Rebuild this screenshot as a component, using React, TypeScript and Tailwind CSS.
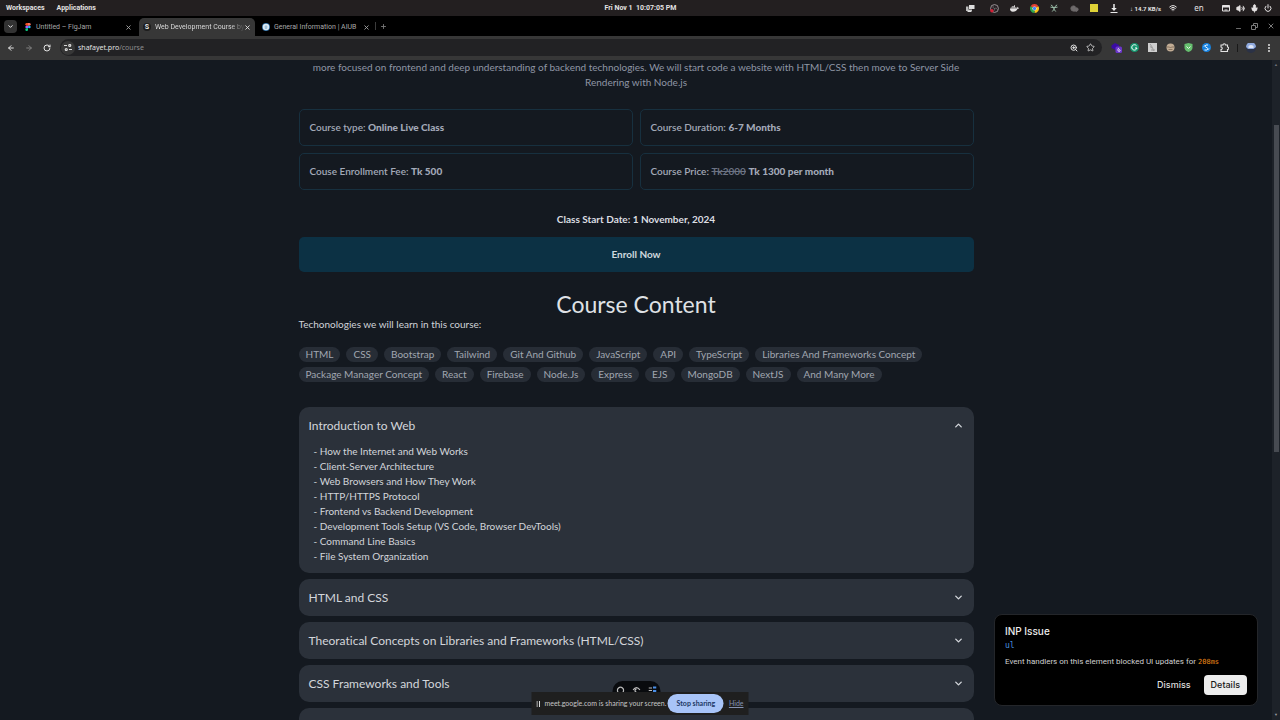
import React, { FunctionComponent, ReactNode, useState } from "react";
import {
  ArrowLeft,
  ArrowRight,
  ChevronDown,
  ChevronUp,
  Cloud,
  Mic,
  Minus,
  Plus,
  Power,
  RotateCw,
  Star,
  Volume2,
  Wifi,
  X,
  ZoomIn,
} from "lucide-react";
import { FaDocker } from "react-icons/fa";

interface CourseSection {
  title: string;
  topics: string[];
}

interface TabProps {
  title: string;
  icon: ReactNode;
  active?: boolean;
}

const technologies = [
  "HTML", "CSS", "Bootstrap", "Tailwind", "Git And Github", "JavaScript", "API", "TypeScript",
  "Libraries And Frameworks Concept", "Package Manager Concept", "React", "Firebase", "Node.Js",
  "Express", "EJS", "MongoDB", "NextJS", "And Many More",
];

const sections: CourseSection[] = [
  {
    title: "Introduction to Web",
    topics: [
      "How the Internet and Web Works",
      "Client-Server Architecture",
      "Web Browsers and How They Work",
      "HTTP/HTTPS Protocol",
      "Frontend vs Backend Development",
      "Development Tools Setup (VS Code, Browser DevTools)",
      "Command Line Basics",
      "File System Organization",
    ],
  },
  { title: "HTML and CSS", topics: [] },
  { title: "Theoratical Concepts on Libraries and Frameworks (HTML/CSS)", topics: [] },
  { title: "CSS Frameworks and Tools", topics: [] },
  { title: "", topics: [] },
];

const ChromeLogo = () => (
  <svg viewBox="0 0 24 24" className="size-[9px]">
    <path d="M12 12 1.6 6A12 12 0 0 1 22.4 6Z" fill="#e34133" />
    <path d="M12 12 22.4 6A12 12 0 0 1 12 24Z" fill="#fbc116" />
    <path d="M12 12V24A12 12 0 0 1 1.6 6Z" fill="#2da94f" />
    <circle cx="12" cy="12" r="5.6" fill="#fff" />
    <circle cx="12" cy="12" r="4.4" fill="#4285f4" />
  </svg>
);

const FigmaLogo = () => (
  <svg viewBox="0 0 16 24" className="h-[8px] w-[6px]">
    <path d="M4 0h4v8H4a4 4 0 0 1 0-8Z" fill="#f24e1e" />
    <path d="M8 0h4a4 4 0 0 1 0 8H8Z" fill="#ff7262" />
    <path d="M4 8h4v8H4a4 4 0 0 1 0-8Z" fill="#a259ff" />
    <circle cx="12" cy="12" r="4" fill="#1abcfe" />
    <path d="M4 16h4v4a4 4 0 1 1-4-4Z" fill="#0acf83" />
  </svg>
);

const TopBar = () => (
  <header className="flex h-4 shrink-0 items-center bg-[#231f20] text-[#e4e2e2]">
    <div className="flex flex-1 gap-3 pl-[6px] text-[7px] font-bold">
      <button>Workspaces</button>
      <button>Applications</button>
    </div>
    <time className="text-[7px] font-bold">Fri Nov 1&nbsp; 10:07:05 PM</time>
    <div className="flex flex-1 items-center justify-end pr-[5px]">
      <span className="flex w-7 justify-center">
        <svg viewBox="0 0 18 14" className="h-[7px] w-[9px]" fill="#dedede">
          <path d="M6 0h11v8H6Z" />
          <path d="M0 3h5v6h7v3H0Z" fill="#bbb" />
          <path d="M3 11h8v3H3Z" />
        </svg>
      </span>
      <span className="flex w-5 justify-center">
        <svg viewBox="0 0 24 24" className="size-[9px]">
          <circle cx="12" cy="12" r="10.5" fill="#282226" stroke="#b9b3b5" strokeWidth="2" />
          <path d="M12 12c-4-1-5-4-3-7M12 12c4-2 7 0 8 3M12 12c1 4-1 7-5 7" fill="none" stroke="#8d8789" strokeWidth="1.5" />
          <circle cx="5" cy="18" r="4.5" fill="#d41f35" />
        </svg>
      </span>
      <span className="flex w-5 justify-center"><FaDocker size={9} /></span>
      <span className="flex w-5 justify-center"><ChromeLogo /></span>
      <span className="flex w-5 justify-center">
        <svg viewBox="0 0 18 18" className="size-2" fill="none" stroke="#a9ceb8" strokeWidth="2">
          <path d="M2 2l5 4 2 4 2-4 5-4M1 7l6 1M17 7l-6 1M9 9v4M5 17l4-5 4 5" />
        </svg>
      </span>
      <span className="flex w-5 justify-center">
        <Cloud size={9} fill="#6e6a6b" className="text-[#6e6a6b]" />
      </span>
      <span className="flex w-5 justify-center"><span className="size-2 bg-[#dfd237]" /></span>
      <span className="flex w-5 justify-center">
        <svg viewBox="0 0 16 18" className="h-[9px] w-2" fill="#ebebeb">
          <path d="M6.500 0h3v8h4L8 14 2.500 8h4ZM1 16h14v2H1Z" />
        </svg>
      </span>
      <span className="flex w-[43px] items-center justify-center whitespace-nowrap text-[6px] font-bold">↓ 14.7 KB/s</span>
      <span className="flex w-3 justify-center"><Wifi size={8} strokeWidth={3} /></span>
      <span className="flex w-10 justify-center font-['Noto_Sans',sans-serif] text-[8px] leading-[10px]">en</span>
      <span className="flex w-[14px] justify-center">
        <svg viewBox="0 0 16 14" className="h-[7px] w-2">
          <path d="M1 1h14v11H1Z" fill="none" stroke="#e4e2e2" strokeWidth="2" />
          <path d="M1 1h14v4H1ZM5 9h6v2H5Z" fill="#e4e2e2" />
        </svg>
      </span>
      <span className="flex w-[14px] justify-center"><Volume2 size={9} fill="#e4e2e2" strokeWidth={2} /></span>
      <span className="flex w-[14px] justify-center"><Mic size={9} fill="#e4e2e2" /></span>
      <span className="flex w-[14px] justify-center"><Power size={8} strokeWidth={3} /></span>
    </div>
  </header>
);

const Tab: FunctionComponent<TabProps> = ({ title, icon, active }) => {
  return (
    <div
      className={
        active
          ? "flex h-full w-[116px] items-center rounded-t-[5px] bg-[#373737] px-1 text-[#e6e6e6]"
          : "flex h-full w-[116px] items-center px-1 text-[#a8a8a8]"
      }
    >
      <span className="flex w-2 shrink-0 justify-center">{icon}</span>
      <button
        className={
          active
            ? "ml-1 flex-1 whitespace-nowrap bg-linear-to-r from-[#e6e6e6] from-85% to-[#444] bg-clip-text text-left text-[7px] text-transparent"
            : "ml-1 flex-1 whitespace-nowrap text-left text-[7px]"
        }
      >
        {title}
      </button>
      <button aria-label="Close tab" className="shrink-0"><X size={7} strokeWidth={3} /></button>
    </div>
  );
};

const TabStrip = () => (
  <div className="flex h-5 shrink-0 items-center bg-black">
    <button aria-label="Search tabs" className="ml-1 flex size-[13px] items-center justify-center rounded-[4px] bg-[#323232] text-white">
      <ChevronDown size={7} strokeWidth={3} />
    </button>
    <div className="ml-[3px] flex h-full items-center gap-[3px] pt-[2px]">
      <Tab title="Untitled – FigJam" icon={<FigmaLogo />} />
      <Tab
        active
        title="Web Development Course by"
        icon={<span className="flex size-2 items-center justify-center rounded-full bg-[#1d1d1d] text-[7px] font-bold">S</span>}
      />
      <Tab
        title="General Information | AIUB"
        icon={
          <svg viewBox="0 0 16 16" className="size-2">
            <circle cx="8" cy="8" r="8" fill="#2e6da4" />
            <circle cx="8" cy="8" r="6.500" fill="#dbe9f3" />
            <path d="M8 4l3 3-1 5H6L5 7Z" fill="#9fc0d8" />
          </svg>
        }
      />
    </div>
    <span className="ml-px h-2 w-px bg-[#3c3c3c]" />
    <button aria-label="New tab" className="ml-1 text-[#7b7b7b]"><Plus size={7} strokeWidth={3} /></button>
    <div className="ml-auto flex items-center gap-[9px] pr-[5px] text-[#7b7b7b]">
      <button aria-label="Minimize" className="pt-1"><Minus size={7} strokeWidth={3} /></button>
      <button aria-label="Restore">
        <svg viewBox="0 0 14 14" className="size-[7px]" fill="none" stroke="currentColor" strokeWidth="2">
          <path d="M1 5h8v8H1ZM5 5V1h8v8H9" />
        </svg>
      </button>
      <button aria-label="Close window"><X size={8} strokeWidth={3} /></button>
    </div>
  </div>
);

const Toolbar = () => (
  <div className="flex h-6 shrink-0 items-center bg-[#373737] pb-px pr-[6px] text-[#e3e3e3]">
    <div className="flex w-[60px] justify-between pl-[7px] pr-[9px]">
      <button aria-label="Back"><ArrowLeft size={8} strokeWidth={3} /></button>
      <button aria-label="Forward" className="text-[#808080]"><ArrowRight size={8} strokeWidth={3} /></button>
      <button aria-label="Reload"><RotateCw size={8} strokeWidth={3} /></button>
    </div>
    <div className="flex h-[17px] flex-1 items-center rounded-full bg-[#222224] pl-px pr-[7px]">
      <button aria-label="Site information" className="flex size-[14px] items-center justify-center rounded-full bg-[#373737]">
        <svg viewBox="0 0 16 14" className="h-[7px] w-2" fill="none" stroke="#d8d8d8" strokeWidth="2.400">
          <path d="M0 3h6M10 11h6" />
          <circle cx="11.500" cy="3" r="2" />
          <circle cx="4.500" cy="11" r="2" />
        </svg>
      </button>
      <p className="ml-[3px] flex-1 font-['Noto_Sans',sans-serif] text-[7px] leading-[10px]">
        <span>shafayet.pro</span>
        <span className="text-[#8e8e8e]">/course</span>
      </p>
      <button aria-label="Zoom" className="mr-2"><ZoomIn size={8} strokeWidth={3} /></button>
      <button aria-label="Bookmark"><Star size={9} strokeWidth={2} /></button>
    </div>
    <div className="flex items-center text-[5px]">
      <span className="ml-[5px] flex w-[18px] justify-center">
        <svg viewBox="0 0 22 22" className="size-[11px]">
          <path d="M1 7l7-5 8 4v6l-7 4-8-4Z" fill="#3a0ca3" />
          <rect x="9" y="9" width="13" height="13" rx="3" fill="#6b35c9" />
          <path d="M16 12c-3 1-3 7 0 7s3-4 0-4" fill="none" stroke="#fff" strokeWidth="1.500" />
        </svg>
      </span>
      <span className="flex w-[18px] justify-center">
        <svg viewBox="0 0 18 18" className="size-[9px]">
          <circle cx="9" cy="9" r="9" fill="#15976f" />
          <path d="M13 5.500A5.300 5.300 0 1 0 14 10h-4" fill="none" stroke="#fff" strokeWidth="2" />
        </svg>
      </span>
      <span className="flex w-[18px] justify-center">
        <svg viewBox="0 0 18 18" className="size-[9px]">
          <rect width="18" height="18" fill="#cfcfcf" />
          <path d="M4 2l5 7 2 7M6 14h8M4 7l4 3" stroke="#999" strokeWidth="2" fill="none" />
        </svg>
      </span>
      <span className="flex w-[18px] justify-center">
        <svg viewBox="0 0 18 18" className="size-[9px]">
          <circle cx="9" cy="9" r="8" fill="#c2ad95" />
          <path d="M2 8h5l2 2 2-2h5M5 13h8" stroke="#75624f" strokeWidth="1.500" fill="none" />
        </svg>
      </span>
      <span className="flex w-[18px] justify-center">
        <svg viewBox="0 0 18 18" className="size-[9px]">
          <path d="M9 0l8 2v7q0 6-8 9-8-3-8-9V2Z" fill="#66bf6f" />
          <path d="M5 7l4 4 4-4" stroke="#e8f7e9" strokeWidth="2" fill="none" />
        </svg>
      </span>
      <span className="flex w-[18px] justify-center">
        <svg viewBox="0 0 18 18" className="size-[9px]">
          <circle cx="9" cy="9" r="9" fill="#1682e0" />
          <path d="M12 4H8a3 3 0 0 0 0 5h2a3 3 0 0 1 0 5H5M4 7l3-3M11 14l3-3" stroke="#fff" strokeWidth="1.800" fill="none" />
        </svg>
      </span>
      <button aria-label="Extensions" className="flex w-[18px] justify-center">
        <svg viewBox="0 0 18 18" className="size-[9px]" fill="none" stroke="#e3e3e3" strokeWidth="2.200">
          <path d="M2 4h4a2 2 0 0 1 5 0h4v4a2 2 0 0 1 0 5v4H2v-4a2 2 0 0 0 0-5Z" />
        </svg>
      </button>
      <span className="ml-1 h-2 w-px bg-[#191919]" />
      <button aria-label="Profile" className="ml-2">
        <svg viewBox="0 0 20 20" className="size-[10px]">
          <circle cx="10" cy="10" r="10" fill="#2b3246" />
          <path d="M0 8a10 10 0 0 1 20 0l-5 4H4Z" fill="#8fa9dd" />
          <path d="M5 6q5-4 10 0v4H5Z" fill="#dfe6f4" />
        </svg>
      </button>
      <button aria-label="Menu" className="ml-2 flex w-[10px] justify-center">
        <svg viewBox="0 0 4 16" className="h-2 w-[2px]" fill="#e3e3e3">
          <circle cx="2" cy="2" r="2" />
          <circle cx="2" cy="8" r="2" />
          <circle cx="2" cy="14" r="2" />
        </svg>
      </button>
    </div>
  </div>
);

const InfoCard: FunctionComponent<{ children: ReactNode }> = ({ children }) => (
  <p className="rounded-[5px] border border-[#17303f] p-[10px] text-[10px] font-semibold leading-[15px] text-[#a3a9b8]">
    {children}
  </p>
);

const Accordion = () => {
  const [open, setOpen] = useState(0);
  return (
    <div className="mt-[25px] flex flex-col gap-[6px]">
      {sections.map((section, i) => (
        <section key={i} className="rounded-[10px] bg-[#2b313a] text-[#d3d6db]">
          <button
            aria-expanded={open === i}
            onClick={() => setOpen(open === i ? -1 : i)}
            className="flex h-[37px] w-full items-center justify-between px-[10px] text-left text-[12px]"
          >
            {section.title}
            {open === i ? <ChevronUp size={11} strokeWidth={3} /> : <ChevronDown size={11} strokeWidth={3} />}
          </button>
          {open === i && section.topics.length > 0 && (
            <ul className="px-[15px] pb-[9px] text-[10px] leading-[15px]">
              {section.topics.map((topic) => (
                <li key={topic}>- {topic}</li>
              ))}
            </ul>
          )}
        </section>
      ))}
    </div>
  );
};

const CoursePage = () => (
  <main className="min-w-0 flex-1 overflow-hidden font-['Lato',sans-serif]">
    <div className="mx-auto max-w-[675px]">
      <p className="px-2 text-center text-[10px] leading-[15px] text-[#8f96a5]">
        more focused on frontend and deep understanding of backend technologies. We will start code a website with
        HTML/CSS then move to Server Side Rendering with Node.js
      </p>
      <div className="mt-[19px] grid grid-cols-2 gap-[7px]">
        <InfoCard>Course type: <b>Online Live Class</b></InfoCard>
        <InfoCard>Course Duration: <b>6-7 Months</b></InfoCard>
        <InfoCard>Couse Enrollment Fee: <b>Tk 500</b></InfoCard>
        <InfoCard>Course Price: <del className="font-bold text-[#6b7282]">Tk2000</del> <b>Tk 1300 per month</b></InfoCard>
      </div>
      <p className="mt-[22px] text-center text-[10px] font-bold leading-[15px] text-[#dcdee2]">
        Class Start Date: 1 November, 2024
      </p>
      <button className="mt-[10px] h-[35px] w-full rounded-[5px] bg-[#0c3144] text-[10px] font-bold text-[#cfd8de]">
        Enroll Now
      </button>
      <h1 className="mt-5 text-center text-[23px] leading-[25px] text-[#dfe1e5]">Course Content</h1>
      <p className="text-[10px] leading-[15px] text-[#d0d3d9]">Techonologies we will learn in this course:</p>
      <ul className="mt-[15px] flex flex-wrap gap-x-[6px] gap-y-[5px] text-[10px] leading-[15px] text-[#a1a7b1]">
        {technologies.map((tech) => (
          <li key={tech} className="rounded-full bg-[#272d36] px-[7px]">{tech}</li>
        ))}
      </ul>
      <Accordion />
    </div>
  </main>
);

const InpIssue = () => (
  <aside className="absolute bottom-[14px] right-[22px] w-[264px] rounded-[8px] border border-[#24262a] bg-black p-[10px] font-['Inter',sans-serif]">
    <h2 className="text-[10px] font-medium leading-[12px] text-[#ededed]">INP Issue</h2>
    <p className="mt-1 font-['DejaVu_Sans_Mono',monospace] text-[8px] leading-[10px] text-[#4a93e0]">ul</p>
    <p className="mt-[6px] font-['Roboto',sans-serif] text-[8px] leading-[10px] text-[#d0d0d0]">
      Event handlers on this element blocked UI updates for{" "}
      <span className="font-['DejaVu_Sans_Mono',monospace] text-[7px] text-[#f08c18]">208ms</span>
    </p>
    <div className="mt-2 flex justify-end gap-[6px] text-[9px] font-medium">
      <button className="h-5 px-[7px] text-[#dedede]">Dismiss</button>
      <button className="h-5 rounded-[4px] bg-[#ededed] px-[7px] text-[#171717]">Details</button>
    </div>
  </aside>
);

const SharingBar = () => (
  <div className="absolute bottom-[5px] left-1/2 flex -translate-x-1/2 flex-col items-center">
    <div className="mr-2 flex h-[11px] w-12 items-center justify-center gap-2 rounded-t-[10px] bg-[#090b0e] pt-1 text-[#bcbcbc]">
      <svg viewBox="0 0 16 12" className="h-[6px] w-2" fill="none" stroke="currentColor" strokeWidth="2.500">
        <path d="M3 12a6 6 0 1 1 10 0" />
      </svg>
      <svg viewBox="0 0 16 12" className="h-[6px] w-2" fill="none" stroke="currentColor" strokeWidth="2.500">
        <path d="M1 8q7-10 14 0M8 6a3 3 0 0 0 0 6" />
      </svg>
      <svg viewBox="0 0 16 12" className="h-[6px] w-2">
        <path d="M0 3h7v2H0ZM0 8h7v2H0Z" fill="#bcbcbc" />
        <path d="M9 1h7v4H9ZM9 8h7v4H9Z" fill="#4a8fe8" />
      </svg>
    </div>
    <div className="flex h-[23px] w-[217px] items-center whitespace-nowrap bg-[#1f1f1f] px-[5px] font-['Lato',sans-serif] text-[7px] text-[#c6c6c6]">
      <svg viewBox="0 0 8 12" className="h-[6px] w-1 shrink-0" fill="#dedede">
        <path d="M0 0h2v12H0ZM5 0h2v12H5Z" />
      </svg>
      <span className="ml-1">meet.google.com is sharing your screen.</span>
      <button className="ml-auto h-[19px] w-14 shrink-0 rounded-full bg-[#a8c4f8] font-bold text-[#1c3764]">Stop sharing</button>
      <a href="#" className="ml-[5px] text-[#8593b3] underline">Hide</a>
    </div>
  </div>
);

const App: FunctionComponent = () => {
  return (
    <div className="relative flex h-screen flex-col overflow-hidden bg-[#141920] font-['Roboto',sans-serif] [font-variant-ligatures:none]">
      <TopBar />
      <TabStrip />
      <Toolbar />
      <div className="flex min-h-0 flex-1">
        <CoursePage />
        <div className="flex w-2 shrink-0 flex-col items-center justify-between bg-[#1d2229] py-[3px]">
          <span className="text-[4px] leading-[4px] text-[#6d7178]">▲</span>
          <div className="mt-[58px] w-[5px] basis-1/2 bg-[#474b52]" />
          <span className="mt-auto text-[4px] leading-[4px] text-[#9a9da2]">▼</span>
        </div>
      </div>
      <InpIssue />
      <SharingBar />
    </div>
  );
};

export default App;
